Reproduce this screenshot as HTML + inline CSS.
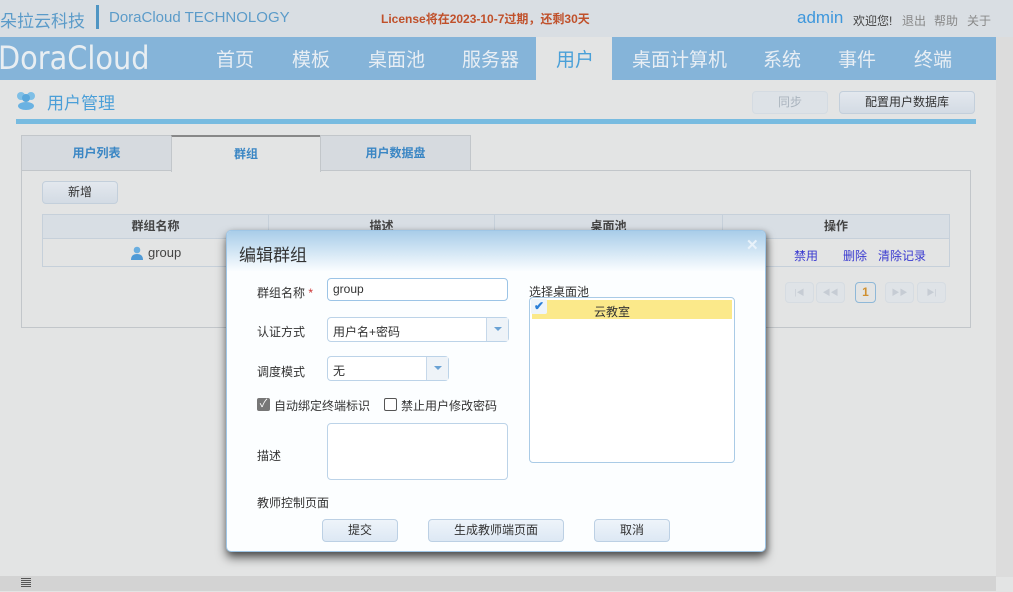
<!DOCTYPE html>
<html><head><meta charset="utf-8">
<style>
*{margin:0;padding:0;box-sizing:border-box}
body{width:1013px;height:592px;overflow:hidden;background:#e3e4e4;font-family:"Liberation Sans","Noto Sans CJK SC",sans-serif;font-size:12px;color:#333;position:relative}
.a{position:absolute}
.btn{position:absolute;border:1px solid #c3cfdb;border-radius:4px;background:linear-gradient(#e3e8ee,#d3dbe4);text-align:center;color:#333;font-size:12px}
.nav span{position:absolute;top:8px;font-size:19px;color:#e8eef4}
.tab{position:absolute;top:135px;height:36px;border:1px solid #c2c6ca;background:#d6dadf;text-align:center;line-height:35px;font-weight:bold;color:#3a86c4;font-size:12px}
.th{position:absolute;top:214px;height:25px;line-height:25px;text-align:center;border-right:1px solid #c6d0da;font-weight:bold;color:#444;font-size:12px}
.lbl{position:absolute;font-size:12px;color:#333}
.inp{position:absolute;border:1px solid #9cc4e6;border-radius:4px;background:#fff}
.pg{position:absolute;top:282px;width:29px;height:21px;border:1px solid #d6dce2;border-radius:4px;background:#dfe3e7;color:#c6ccd4;font-size:8px;text-align:center;line-height:19px}
.dbtn{position:absolute;top:519px;height:23px;border:1px solid #bcd0e4;border-radius:4px;background:linear-gradient(#eef4fa,#dde8f4);text-align:center;line-height:21px;font-size:12px;color:#333}
</style></head><body>
<div class="a" style="left:0;top:0;width:1013px;height:37px;background:#d9dee3"></div>
<div class="a" style="left:0;top:7px;font-size:17px;color:#5b9bc9">朵拉云科技</div>
<div class="a" style="left:96px;top:5px;width:3px;height:24px;background:#4f95c3"></div>
<div class="a" style="left:109px;top:9px;font-size:15px;color:#5b9bc9">DoraCloud TECHNOLOGY</div>
<div class="a" style="left:381px;top:10px;font-size:12px;font-weight:bold;color:#c0502a">License将在2023-10-7过期，还剩30天</div>
<div class="a" style="left:797px;top:8px;font-size:17px;color:#3e97dc">admin</div>
<div class="a" style="left:853px;top:12px;font-size:12px;color:#444">欢迎您!</div>
<div class="a" style="left:902px;top:12px;font-size:12px;color:#888">退出</div>
<div class="a" style="left:934px;top:12px;font-size:12px;color:#888">帮助</div>
<div class="a" style="left:967px;top:12px;font-size:12px;color:#888">关于</div>
<div class="a nav" style="left:0;top:37px;width:996px;height:43px;background:#85b4d9">
<div class="a" style="left:-2px;top:2px;font-size:32px;color:#e8eef2;font-family:'DejaVu Sans',sans-serif;transform:scaleX(.9);transform-origin:left top">DoraCloud</div>
<span style="left:216px">首页</span><span style="left:292px">模板</span><span style="left:368px">桌面池</span><span style="left:462px">服务器</span>
<div class="a" style="left:536px;top:0;width:76px;height:43px;background:#e3e4e4"></div>
<span style="left:556px;color:#4aa0d8">用户</span>
<span style="left:632px">桌面计算机</span><span style="left:763px">系统</span><span style="left:838px">事件</span><span style="left:914px">终端</span>
</div>
<div class="a" style="left:996px;top:37px;width:17px;height:540px;background:#dcdcdc"></div>
<svg class="a" style="left:15px;top:90px" width="22" height="20" viewBox="0 0 22 20"><circle cx="6" cy="6" r="4" fill="#7fbfe6"/><circle cx="16" cy="6" r="4" fill="#7fbfe6"/><circle cx="11" cy="8" r="4" fill="#5aa8dc"/><ellipse cx="11" cy="16" rx="8" ry="4" fill="#6ab2e2"/></svg>
<div class="a" style="left:47px;top:89px;font-size:17px;color:#4b9fd8">用户管理</div>
<div class="btn" style="left:752px;top:91px;width:76px;height:23px;line-height:21px;color:#aab4be;background:#dde2e7;border-color:#d4dbe2">同步</div>
<div class="btn" style="left:839px;top:91px;width:136px;height:23px;line-height:21px">配置用户数据库</div>
<div class="a" style="left:16px;top:119px;width:960px;height:5px;background:#78bbe0"></div>
<div class="a" style="left:21px;top:170px;width:950px;height:158px;border:1px solid #c2c6ca"></div>
<div class="tab" style="left:21px;width:151px">用户列表</div>
<div class="tab" style="left:171px;width:150px;background:#e3e4e4;border-top:2px solid #888;border-bottom:none;height:37px">群组</div>
<div class="tab" style="left:320px;width:151px">用户数据盘</div>
<div class="btn" style="left:42px;top:181px;width:76px;height:23px;line-height:21px">新增</div>
<div class="a" style="left:42px;top:214px;width:908px;height:53px;border:1px solid #c6d0da"></div>
<div class="a" style="left:43px;top:215px;width:906px;height:24px;background:#d8dee4;border-bottom:1px solid #c6d0da"></div>
<div class="th" style="left:43px;width:226px">群组名称</div>
<div class="th" style="left:269px;width:226px">描述</div>
<div class="th" style="left:495px;width:228px">桌面池</div>
<div class="th" style="left:723px;width:226px;border:none">操作</div>
<svg class="a" style="left:131px;top:246px" width="12" height="14" viewBox="0 0 12 14"><circle cx="6" cy="4" r="3.3" fill="#6aaee0"/><path d="M0 14 Q0 8 6 8 Q12 8 12 14Z" fill="#4f9ad6"/></svg>
<div class="a" style="left:148px;top:245px;font-size:13px;color:#444">group</div>
<div class="a" style="left:794px;top:247px;color:#3a3ad0">禁用</div>
<div class="a" style="left:843px;top:247px;color:#3a3ad0">删除</div>
<div class="a" style="left:878px;top:247px;color:#3a3ad0">清除记录</div>
<div class="pg" style="left:785px">|◀</div><div class="pg" style="left:816px">◀◀</div>
<div class="a" style="left:855px;top:282px;width:21px;height:21px;border:1px solid #8fb8d8;border-radius:4px;text-align:center;line-height:19px;font-weight:bold;color:#d09030;font-size:12px">1</div>
<div class="pg" style="left:885px">▶▶</div><div class="pg" style="left:917px">▶|</div>
<div class="a" style="left:0;top:576px;width:996px;height:15px;background:#d3d3d3"></div>
<div class="a" style="left:21px;top:578px;width:10px;height:9px;background:repeating-linear-gradient(#555 0 1px,transparent 1px 2px)"></div>
<div class="a" style="left:226px;top:230px;width:540px;height:322px;background:#fcfeff;border:1px solid #9fc6e6;border-radius:5px;box-shadow:0 6px 10px rgba(0,0,0,.55),2px 2px 6px rgba(0,0,0,.3);overflow:hidden">
<div class="a" style="left:0;top:0;width:540px;height:40px;background:linear-gradient(#a9cde9,#fafdff)"></div>
<div class="a" style="left:12px;top:10px;font-size:17px;color:#333">编辑群组</div>
<div class="a" style="left:519px;top:5px;font-size:15px;color:#e8f2fa;font-weight:bold">✕</div>
</div>
<div class="lbl" style="left:257px;top:284px">群组名称 <span style="color:#c33">*</span></div>
<div class="inp" style="left:327px;top:278px;width:181px;height:23px"><span class="a" style="left:5px;top:3px;font-size:12px;color:#333">group</span></div>
<div class="lbl" style="left:257px;top:323px">认证方式</div>
<div class="inp" style="left:327px;top:317px;width:182px;height:25px;border-color:#bcd3e8"><span class="a" style="left:5px;top:5px">用户名+密码</span><div class="a" style="right:0;top:0;width:22px;height:23px;border-left:1px solid #c6d8ea;background:#eef3f8"><div class="a" style="left:7px;top:9px;border:4px solid transparent;border-top:4px solid #6aa2d4"></div></div></div>
<div class="lbl" style="left:257px;top:363px">调度模式</div>
<div class="inp" style="left:327px;top:356px;width:122px;height:25px;border-color:#bcd3e8"><span class="a" style="left:5px;top:5px">无</span><div class="a" style="right:0;top:0;width:22px;height:23px;border-left:1px solid #c6d8ea;background:#eef3f8"><div class="a" style="left:7px;top:9px;border:4px solid transparent;border-top:4px solid #6aa2d4"></div></div></div>
<div class="a" style="left:257px;top:398px;width:13px;height:13px;background:#777;border-radius:2px;color:#fff;font-size:11px;line-height:13px;text-align:center">✓</div>
<div class="lbl" style="left:274px;top:397px">自动绑定终端标识</div>
<div class="a" style="left:384px;top:398px;width:13px;height:13px;border:1px solid #555;border-radius:2px;background:#fff"></div>
<div class="lbl" style="left:401px;top:397px">禁止用户修改密码</div>
<div class="lbl" style="left:257px;top:447px">描述</div>
<div class="inp" style="left:327px;top:423px;width:181px;height:57px;border-color:#bcd3e8"></div>
<div class="lbl" style="left:257px;top:494px">教师控制页面</div>
<div class="lbl" style="left:529px;top:283px">选择桌面池</div>
<div class="inp" style="left:529px;top:297px;width:206px;height:166px;border-color:#aacbe6"></div>
<div class="a" style="left:532px;top:300px;width:200px;height:19px;background:#fbe98a"></div>
<div class="a" style="left:531px;top:299px;width:16px;height:15px;background:#eef4fa;border-radius:2px;color:#2b7fd8;font-size:12px;line-height:15px;text-align:center;font-weight:bold">✔</div>
<div class="lbl" style="left:594px;top:303px">云教室</div>
<div class="dbtn" style="left:322px;width:76px">提交</div>
<div class="dbtn" style="left:428px;width:136px">生成教师端页面</div>
<div class="dbtn" style="left:594px;width:76px">取消</div>
</body></html>
